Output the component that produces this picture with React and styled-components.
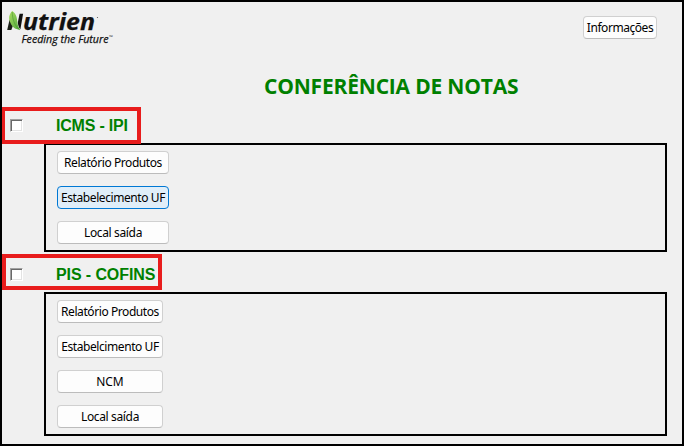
import React from "react";
import styled, { createGlobalStyle } from "styled-components";

const GlobalStyle = createGlobalStyle`
  * { box-sizing: border-box; }
  body { margin: 0; background: #f0f0f0; }
`;

const Window = styled.main`
  width: 684px;
  height: 446px;
  overflow: hidden;
  border: 2px solid #000;
  background: #f0f0f0;
  font-family: "Open Sans", "Noto Sans", sans-serif;
`;

const Header = styled.header`
  display: flex;
  justify-content: space-between;
  align-items: flex-start;
  height: 68px;
  padding-right: 25px;
`;

const Logo = styled.svg`
  display: block;
  width: 120px;
  height: 50px;
`;

const Button = styled.button`
  display: flex;
  align-items: center;
  justify-content: center;
  flex: none;
  width: ${(p) => p.$width}px;
  height: 23px;
  margin: 0;
  padding: 0;
  border: 1px solid ${(p) => (p.$active ? "#0078d4" : "#d0d0d0")};
  border-bottom-color: ${(p) => (p.$active ? "#0078d4" : "#bcbcbc")};
  border-radius: 4px;
  background: ${(p) => (p.$active ? "#e0eef9" : "#fdfdfd")};
  color: #000;
  font: 12px/20px "Noto Sans", "Open Sans", sans-serif;
  letter-spacing: ${(p) => p.$tracking || 0}px;
  white-space: nowrap;
`;

const HeaderAction = styled.div`
  padding-top: 14px;
`;

const Title = styled.h1`
  height: 37px;
  margin: 0 0 0 262px;
  color: #008000;
  font-size: 21px;
  font-weight: 700;
  line-height: 33px;
  letter-spacing: -0.19px;
  white-space: nowrap;
`;

const Section = styled.section`
  height: ${(p) => p.$height}px;
`;

const SectionHeader = styled.label`
  position: relative;
  z-index: 1;
  display: flex;
  align-items: center;
  width: ${(p) => p.$width}px;
  height: ${(p) => p.$height}px;
  margin-left: ${(p) => p.$offset}px;
  padding-top: ${(p) => p.$drop || 0}px;
  padding-left: ${(p) => 4 - p.$offset}px;
  border: 4px solid #e81c1c;
`;

const Checkbox = styled.input`
  appearance: none;
  flex: none;
  width: 13px;
  height: 13px;
  margin: 0 33px 0 0;
  border: 1px solid;
  border-color: #a0a0a0 #fff #fff #a0a0a0;
  background: #fff;
  box-shadow: inset 1px 1px #696969, inset -1px -1px #e3e3e3;
`;

const SectionTitle = styled.span`
  color: #008000;
  font: bold 16px/18px "Liberation Sans", Arial, sans-serif;
  letter-spacing: ${(p) => p.$tracking || 0}px;
  white-space: nowrap;
`;

const Panel = styled.div`
  display: flex;
  flex-direction: column;
  gap: 12px;
  width: 623px;
  height: ${(p) => p.$height}px;
  margin: ${(p) => p.$top}px 0 0 42px;
  padding: 6px 11px;
  border: 2px solid #000;
`;

function NutrienLogo() {
  return (
    <Logo viewBox="2 2 120 50" role="img" aria-label="Nutrien Feeding the Future">
      <defs>
        <linearGradient id="leaf" x1="0" y1="0" x2="1" y2="1">
          <stop offset="0" stopColor="#a9dc62" />
          <stop offset="1" stopColor="#4fa53a" />
        </linearGradient>
      </defs>
      <path d="M9.6 19.5 L13 25.5 L11.3 30 L7.2 30 Z" fill="#1a1f17" />
      <path d="M12.2 11 C16.8 14.2 17 18.5 17.4 22.3 C17.7 25.5 18.6 28 20.3 30 C14.5 29.6 12 26.4 10.3 22.6 C8.3 18.5 8.8 14.6 12.2 11 Z" fill="url(#leaf)" />
      <path d="M12.2 12 C12.4 19 14.5 26 19.5 29.6" fill="none" stroke="#3c8f2d" strokeWidth=".5" />
      <path d="M19.6 13.8 L23.1 13.8 L20.4 29.3 C18.5 27 17.9 24.4 17.9 21.9 Z" fill="#111" />
      <text x="23" y="30" fill="#111" stroke="#111" strokeWidth=".25" fontFamily="Open Sans" fontSize="22.5" fontWeight="700" fontStyle="italic" textLength="72" lengthAdjust="spacingAndGlyphs">utrien</text>
      <circle cx="97.5" cy="17.5" r=".6" fill="#555" />
      <text x="21.5" y="42.5" fill="#111" stroke="#111" strokeWidth=".25" fontFamily="Open Sans" fontSize="10.8" fontStyle="italic" textLength="87" lengthAdjust="spacingAndGlyphs">Feeding the Future</text>
      <text x="109" y="39" fill="#333" fontFamily="Open Sans" fontSize="5">™</text>
    </Logo>
  );
}

export default function App() {
  return (
    <>
      <GlobalStyle />
      <Window>
        <Header>
          <NutrienLogo />
          <HeaderAction>
            <Button $width={74} $tracking={-0.45}>Informações</Button>
          </HeaderAction>
        </Header>
        <Title>CONFERÊNCIA DE NOTAS</Title>
        <Section $height={147}>
          <SectionHeader $width={140} $height={37} $offset={-1}>
            <Checkbox type="checkbox" />
            <SectionTitle $tracking={-0.2}>ICMS - IPI</SectionTitle>
          </SectionHeader>
          <Panel $height={109} $top={-1}>
            <Button $width={112} $tracking={-0.42}>Relatório Produtos</Button>
            <Button $width={112} $tracking={-0.42} $active>Estabelecimento UF</Button>
            <Button $width={112} $tracking={-0.35}>Local saída</Button>
          </Panel>
        </Section>
        <Section $height={182}>
          <SectionHeader $width={160} $height={36} $offset={0} $drop={5}>
            <Checkbox type="checkbox" />
            <SectionTitle $tracking={-0.1}>PIS - COFINS</SectionTitle>
          </SectionHeader>
          <Panel $height={144} $top={2}>
            <Button $width={106} $tracking={-0.42}>Relatório Produtos</Button>
            <Button $width={106} $tracking={-0.42}>Estabelcimento UF</Button>
            <Button $width={106} $tracking={-0.1}>NCM</Button>
            <Button $width={106} $tracking={-0.35}>Local saída</Button>
          </Panel>
        </Section>
      </Window>
    </>
  );
}
